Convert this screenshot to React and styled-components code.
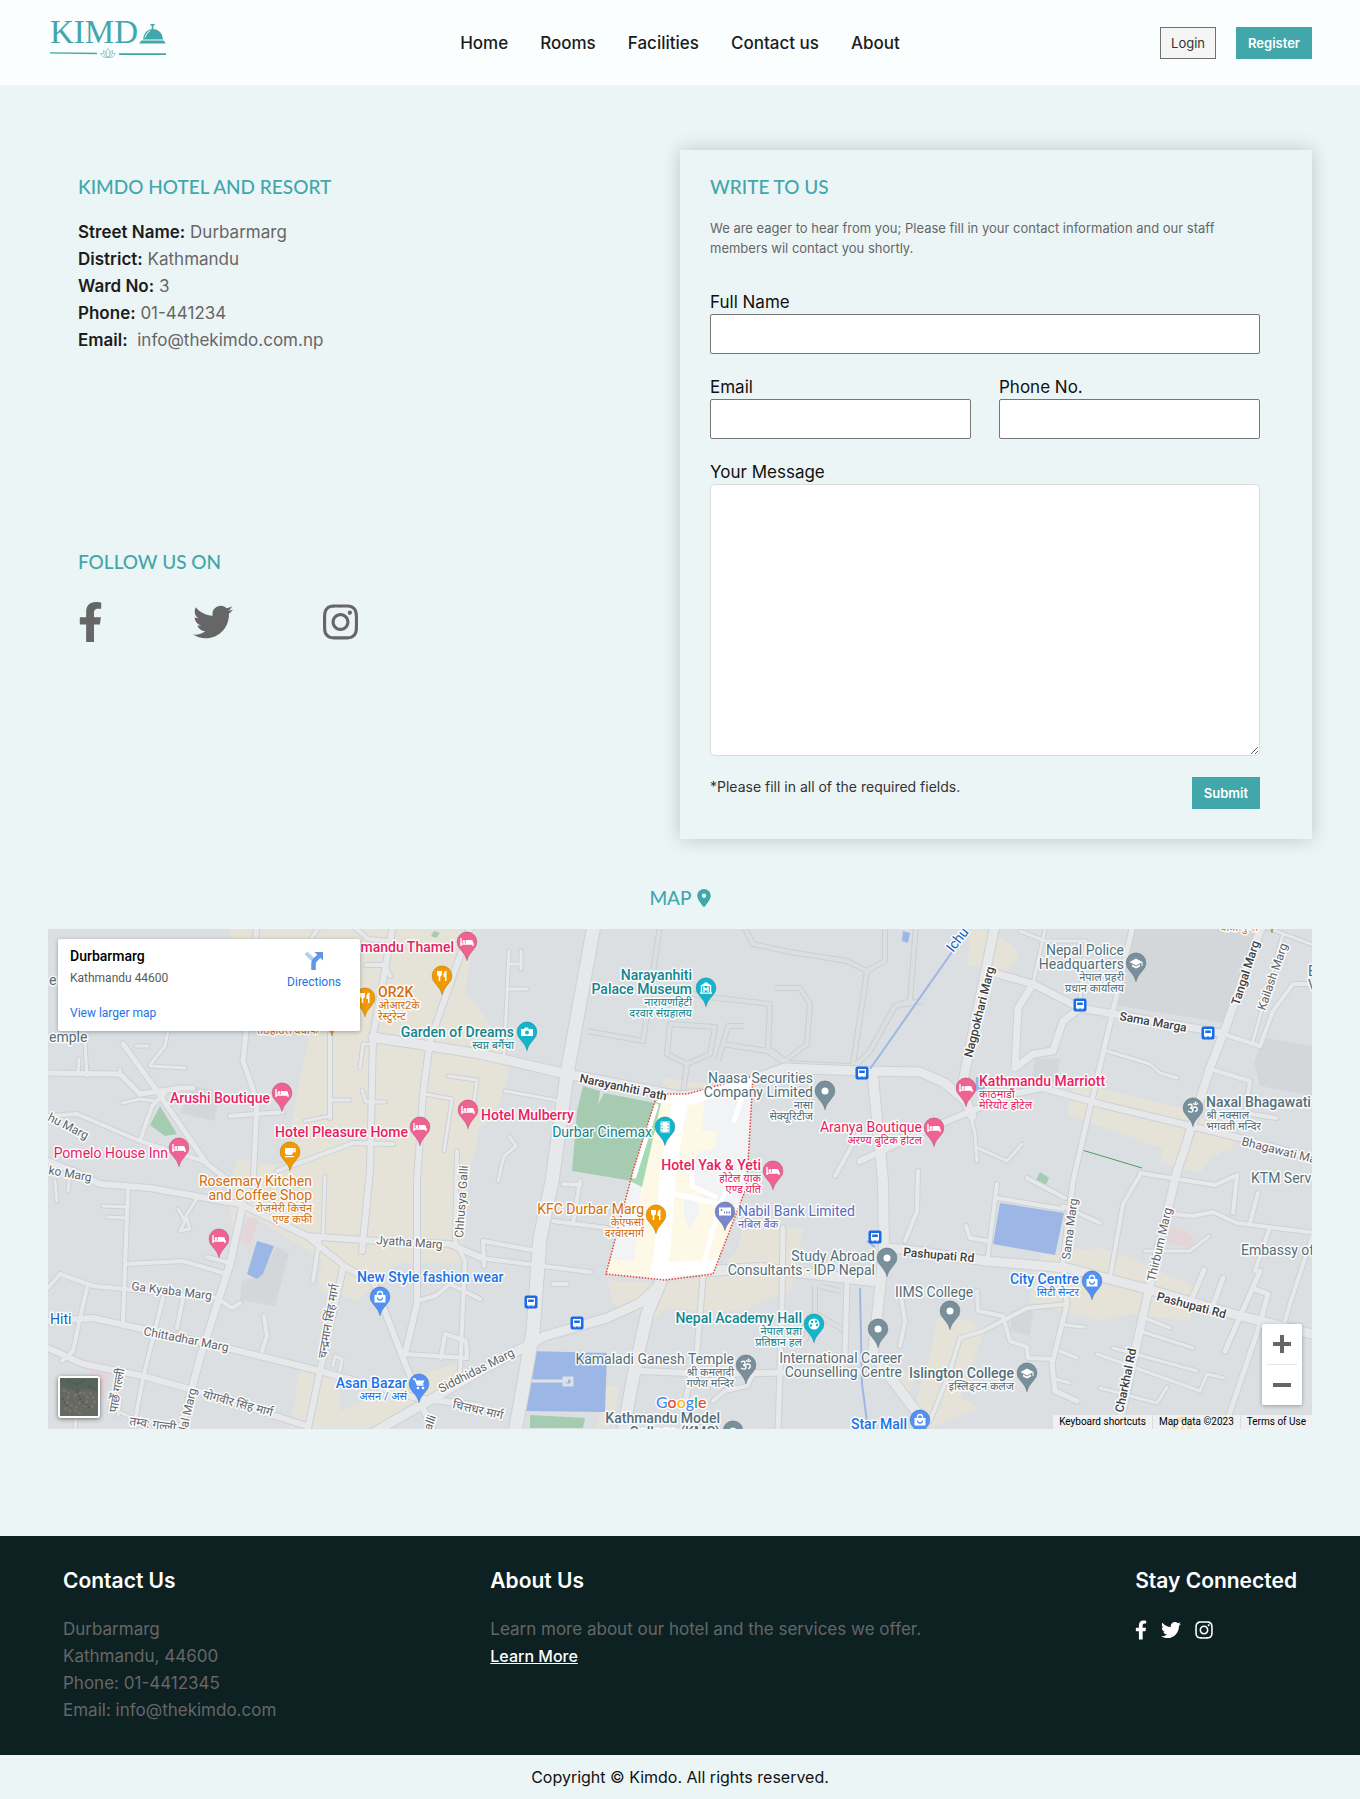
import React from "react";
import styled, { createGlobalStyle } from "styled-components";
import { FaFacebookF, FaTwitter, FaInstagram } from "react-icons/fa";
import { FaLocationDot } from "react-icons/fa6";

const GlobalStyle = createGlobalStyle`
  *, *::before, *::after { box-sizing: border-box; }
  body {
    margin: 0;
    background: #ecf5f6;
    color: #111;
    font-family: Inter, "Noto Sans", sans-serif;
    font-size: 16px;
    line-height: 24px;
  }
  h1, h2, p, ul, address { margin: 0; padding: 0; font-style: normal; }
  ul { list-style: none; }
  button, input, textarea { font: inherit; }
`;

/* ---------- header ---------- */

const Header = styled.header`
  display: grid;
  grid-template-columns: 1fr auto 1fr;
  align-items: center;
  padding: 15px 48px;
  min-height: 85px;
  background: #fafeff;
`;

const LogoLink = styled.a`
  justify-self: start;
  display: block;
  height: 55px;
`;

const NavList = styled.ul`
  display: flex;
  gap: 32px;
`;

const NavLink = styled.a`
  color: #1c1c1c;
  font-size: 17px;
  font-weight: 500;
  text-decoration: none;
`;

const Actions = styled.div`
  justify-self: end;
  display: flex;
  gap: 20px;
`;

const Button = styled.button`
  height: 32px;
  padding: 0 ${(p) => (p.$outlined ? 10 : 12)}px;
  font-size: 13px;
  line-height: 20px;
  border-radius: 0;
  cursor: pointer;
  border: ${(p) => (p.$outlined ? "1px solid #6f6f6f" : "0")};
  background: ${(p) => (p.$outlined ? "#f5f5f5" : "#42a7aa")};
  color: ${(p) => (p.$outlined ? "#333" : "#fff")};
  font-weight: ${(p) => (p.$outlined ? 400 : 600)};
`;

/* ---------- contact ---------- */

const Main = styled.main`
  padding: 65px 48px 107px;
`;

const Columns = styled.div`
  display: grid;
  grid-template-columns: 1fr 1fr;
`;

const Info = styled.section`
  display: flex;
  flex-direction: column;
  gap: 195px;
  padding: 24px 30px;
`;

const Heading = styled.h2`
  color: #42a7aa;
  font-family: Lato, sans-serif;
  font-size: 19px;
  line-height: 26px;
  font-weight: 500;
`;

const Address = styled.address`
  padding-top: 19px;
  color: #666;
  line-height: 27px;
  font-size: 17px;
`;

const Term = styled.strong`
  color: #1c1c1c;
  font-weight: 600;
`;

const Social = styled.ul`
  display: flex;
  gap: ${(p) => p.$gap}px;
  padding-top: ${(p) => p.$top}px;
  a { display: block; color: ${(p) => p.$color}; }
  svg { display: block; height: ${(p) => p.$size}px; }
`;

const Card = styled.section`
  padding: 24px 52px 30px 30px;
  background: #ecf5f6;
  box-shadow: 0 0 18px rgba(0, 0, 0, 0.2);
`;

const Intro = styled.p`
  padding: 18px 0 32px;
  font-size: 13px;
  line-height: 20px;
  color: #666;
`;

const Form = styled.form`
  display: grid;
  grid-template-columns: 1fr 1fr;
  column-gap: 28px;
  row-gap: 21px;
`;

const Field = styled.div`
  display: flex;
  flex-direction: column;
  grid-column: ${(p) => (p.$wide ? "1 / -1" : "auto")};
  font-size: 17px;
`;

const Input = styled.input`
  width: 100%;
  height: 40px;
  padding: 0 8px;
  border: 1px solid #767676;
  border-radius: 2px;
  background: #fff;
`;

const TextArea = styled.textarea`
  display: block;
  width: 100%;
  height: 272px;
  padding: 8px;
  border: 1px solid #dcdcdc;
  border-radius: 5px;
  background: #fff;
  resize: both;
`;

const FormFoot = styled.div`
  grid-column: 1 / -1;
  display: flex;
  justify-content: space-between;
  align-items: flex-start;
`;

const Note = styled.p`
  font-size: 14px;
  line-height: 20px;
  color: #333;
`;

/* ---------- map ---------- */

const MapHeading = styled(Heading)`
  display: flex;
  justify-content: center;
  align-items: center;
  gap: 5px;
  padding: 46px 0 18px;
  svg { width: 14px; height: 18px; }
`;

const MapFrame = styled.section`
  position: relative;
  height: 500px;
  overflow: hidden;
  font-family: Roboto, "Noto Sans", sans-serif;
  background: #dbdfe2;
`;

const MapDrawing = styled.svg`
  display: block;
  width: 100%;
  height: 100%;
`;

const PlaceCard = styled.div`
  position: absolute;
  top: 10px;
  left: 10px;
  width: 302px;
  height: 92px;
  padding: 8px 19px 9px 12px;
  display: flex;
  justify-content: space-between;
  background: #fff;
  border-radius: 2px;
  box-shadow: 0 1px 4px rgba(0, 0, 0, 0.3);
  font-size: 12px;
  line-height: 16px;
  a { color: #1a73e8; text-decoration: none; }
`;

const PlaceText = styled.div`
  display: flex;
  flex-direction: column;
  color: #5b5b5b;
  h2 { font-size: 14px; line-height: 18px; font-weight: 500; color: #000; }
  p { padding: 5px 0 19px; }
`;

const Directions = styled.a`
  display: flex;
  flex-direction: column;
  align-items: center;
  align-self: flex-start;
  gap: 3px;
  padding-top: 4px;
`;

const ZoomBox = styled.div`
  position: absolute;
  right: 10px;
  bottom: 24px;
  width: 40px;
  background: #fff;
  border-radius: 2px;
  box-shadow: 0 1px 4px rgba(0, 0, 0, 0.3);
  hr { margin: 0 5px; border: 0; border-top: 1px solid #e6e6e6; }
`;

const ZoomButton = styled.button`
  display: flex;
  align-items: center;
  justify-content: center;
  width: 40px;
  height: 40px;
  padding: 0;
  border: 0;
  background: none;
`;

const Satellite = styled.button`
  position: absolute;
  left: 10px;
  bottom: 11px;
  width: 42px;
  height: 42px;
  padding: 0;
  border: 2px solid #fff;
  border-radius: 3px;
  box-shadow: 0 1px 4px rgba(0, 0, 0, 0.5);
  overflow: hidden;
  background: #62685f;
  svg { display: block; }
`;

const Attribution = styled.div`
  position: absolute;
  right: 0;
  bottom: 0;
  display: flex;
  height: 14px;
  background: rgba(245, 245, 245, 0.75);
  font-size: 10px;
  line-height: 14px;
  > * { padding: 0 6px; color: #000; text-decoration: none; border: 0; background: none; line-height: 14px; }
  > * + * { border-left: 1px solid #dcdcdc; }
`;

/* ---------- footer ---------- */

const Footer = styled.footer`
  display: flex;
  justify-content: space-between;
  padding: 30px 63px 31px;
  background: #0d2123;
  color: #666;
  font-size: 17px;
  line-height: 27px;
`;

const FooterTitle = styled.h2`
  padding-bottom: 20px;
  color: #fff;
  font-size: 21px;
  line-height: 30px;
  font-weight: 600;
`;

const FooterLink = styled.a`
  color: #fff;
  font-size: 16px;
  font-weight: 500;
`;

const Copyright = styled.p`
  padding: 10px 0 11px;
  text-align: center;
  color: #111;
`;

/* ---------- map data ---------- */

const COMMERCIAL = [
  "230,928 475,928 465,990 482,1010 510,1062 505,1085 492,1120 480,1125 468,1180 462,1262 400,1262 385,1270 358,1300 318,1288 322,1258 252,1215 232,1228 230,1200 236,1158 285,1165 292,1120 300,1075 308,1045 308,1000 232,985",
  "970,928 982,928 1010,942 1020,955 1007,970 968,965",
  "1073,1087 1088,1085 1183,1107 1233,1133 1233,1147 1210,1157 1200,1172 1177,1167 1160,1160 1163,1147 1150,1143 1067,1113",
  "1043,1253 1100,1247 1130,1257 1197,1287 1190,1320 1130,1313 1100,1320 1073,1313 1030,1300 1033,1270",
  "937,1317 973,1320 982,1337 960,1397 980,1407 930,1427 910,1417 930,1357",
  "737,1250 745,1220 803,1228 795,1275 790,1290 740,1310 665,1308 655,1318 613,1303 608,1280 661,1282 715,1275",
  "663,1077 710,1083 700,1092 663,1090",
  "300,1367 340,1373 340,1410 430,1370 460,1362 470,1375 380,1427 290,1427",
  "604,1385 620,1385 610,1427 596,1427 600,1410",
  "903,1370 915,1378 910,1390 898,1388",
];

const DARK = [
  "1130,928 1258,928 1226,1022 1114,1004",
  "1265,1037 1312,1045 1312,1095 1260,1085 1254,1060",
  "276,1245 289,1253 275,1305 240,1299 242,1280 262,1275",
  "1035,1057 1060,1058 1055,1082 1032,1078",
  "193,1085 220,1090 214,1120 180,1112",
  "1012,1310 1033,1310 1030,1335 1010,1330",
];

const WATER = [
  "257,1240 274,1245 263,1273 257,1278 247,1273",
  "1000,1202 1064,1212 1055,1254 993,1243",
  "529,1350 607,1352 605,1411 526,1410",
  "903,930 910,932 908,942 902,940",
  "976,1076 986,1078 984,1092 975,1090",
];

const PINK_AREAS = [
  "247,1216 258,1218 250,1245 240,1240",
  "1170,1225 1187,1230 1195,1240 1190,1248 1167,1241",
  "90,1369 110,1373 104,1398 92,1390",
];

const GREEN = [
  "583,1085 600,1090 598,1104 604,1092 655,1102 633,1180 572,1170 577,1110",
  "1040,1171 1049,1177 1046,1184 1036,1179",
  "434,930 440,932 436,937 431,935",
  "160,1105 177,1133 165,1135 150,1124",
  "530,1414 585,1417 583,1427 530,1427",
];

const ROADS = [
  [14, "M594 924L568 1067L552 1180L540 1237L533 1330L515 1432"],
  [10, "M373 1036L480 1053L562 1072L680 1095L720 1090L753 1078L785 1067L860 1070L920 1071L945 1082L966 1100L972 1115"],
  [13, "M682 1100L668 1170L662 1253L661 1280L647 1313L633 1377L623 1432"],
  [10, "M655 1288L640 1302L607 1317L545 1335L480 1370L373 1432"],
  [11, "M662 1270L710 1270L760 1267L873 1280"],
  [11, "M873 1077L883 1180L884 1250L873 1353L925 1422"],
  [10, "M884 1247L900 1248L987 1260L1067 1267L1147 1288L1233 1313L1312 1333"],
  [10, "M995 924L963 1080"],
  [8, "M987 970L1033 983L1080 1007L1200 1028L1220 1032"],
  [9, "M1262 924L1227 1023L1210 1067L1183 1153L1177 1170L1147 1297L1117 1432"],
  [6, "M1133 924L1113 1010L1090 1107L1073 1180L1063 1260L1067 1303L1052 1363L1055 1390L1077 1400"],
  [8, "M1033 983L1018 1007L1015 1067L1033 1053L1053 1050L1063 1020L1080 1007"],
  [7, "M860 1160L940 1123L1013 1093L1043 1087L1100 1103L1240 1137L1316 1158"],
  [4, "M970 1112L975 1133L977 1160M978 1147L1007 1160L1022 1143"],
  [5, "M1207 1067L1250 1080L1245 1112L1276 1117M1220 1032L1260 1045L1273 1010L1293 983L1316 983"],
  [4, "M1107 1050L1150 1063L1160 1072L1177 1077M1283 933L1253 1040M1260 924L1316 945"],
  [4, "M1020 930L1045 940L1086 940L1080 1000M1045 928L1033 983"],
  [5, "M997 1183L988 1255M997 1197L1063 1208M1027 1177L1065 1197M1063 1205L1100 1222M966 1225L970 1237L988 1240"],
  [5, "M1140 1174L1123 1203L1110 1277M1140 1172L1215 1184L1237 1174L1233 1212"],
  [5, "M1173 1213L1193 1215L1213 1211L1237 1222L1316 1232M1258 1192L1250 1222M1270 1226L1255 1270M1312 1236L1290 1303L1283 1327"],
  [5, "M1067 1303L1027 1307L983 1330L960 1337L950 1370L930 1420M977 1290L978 1310L1003 1315L1010 1340L1027 1346L1028 1357L1052 1358"],
  [4, "M1145 1317L1170 1327M1140 1330L1193 1347M1113 1347L1197 1370M1097 1353L1200 1390L1207 1373L1224 1377M1100 1387L1157 1402L1167 1386"],
  [6, "M1260 1323L1223 1432M1260 1270L1225 1350M1223 1277L1212 1307M1204 1269L1190 1302M1252 1287L1268 1293L1260 1322"],
  [4, "M1065 1324L1084 1326M1060 1350L1077 1357M1055 1378L1070 1382M1145 1250L1190 1250L1209 1235"],
  [6, "M703 1277L697 1350L685 1400M783 1227L782 1303L778 1432M847 1280L845 1355"],
  [7, "M640 1370L713 1373L863 1370"],
  [5, "M483 1240L537 1250M480 1257L590 1271M553 1220L607 1227M580 1180L573 1223M483 1240L484 1265M580 1184L563 1183M553 1283L567 1283"],
  [4, "M509 950L504 1060M509 963L521 963M521 950L521 968M509 988L527 988M505 1090L560 1100M509 1135L516 1145L504 1155L498 1180"],
  [5, "M713 1400L725 1390L747 1385L755 1370M900 1345L905 1320L900 1290M835 1175L860 1130M918 1170L917 1210L905 1240"],
  [6, "M123 1043L157 1090L207 1163L232 1182M48 1072L120 1073L140 1093L180 1087L193 1087M257 924L243 1060L257 1100L253 1185"],
  [7, "M393 924L373 1035L370 1170L362 1250M471 924L430 1040L423 1093L417 1180L417 1303L405 1353"],
  [5, "M330 1033L330 1117M277 1170L353 1142L393 1143M48 1115L77 1113L140 1140L203 1160M140 1140L152 1105L165 1092M230 1115L283 1111"],
  [4, "M136 1045L148 1045M150 1065L185 1067M150 1064L165 1045L168 1030M85 1040L87 1075M79 1058L78 1074M120 1068L120 1075M122 1102L140 1098L155 1100"],
  [4, "M305 1120L330 1115M330 1099L350 1099M360 1067L363 1043L375 1043M362 1089L366 1101L385 1101M448 1075L477 1079L472 1115M425 1093L452 1098L444 1150"],
  [5, "M373 1039L430 1047M366 964L385 964L390 975M320 924L310 940M352 924L368 938L390 940"],
  [7, "M48 1160L73 1170L100 1183L150 1187L240 1203L307 1235L347 1267L373 1280L403 1357L420 1400L434 1432"],
  [8, "M243 1203L230 1263L200 1357L180 1432"],
  [5, "M128 1187L123 1320M128 1263L183 1260L227 1273M48 1287L60 1273L93 1285L217 1297L232 1307L240 1302M207 1256L230 1262"],
  [7, "M48 1320L93 1317L227 1347L320 1370L417 1397L480 1405M48 1347L83 1363L143 1375L207 1393L307 1425"],
  [7, "M343 1267L320 1370L307 1432M307 1235L377 1240L450 1243L484 1258"],
  [5, "M457 1150L455 1240L465 1260L460 1370M417 1300L435 1295L450 1283L480 1298M405 1353L467 1357L466 1340L445 1333L441 1357"],
  [5, "M87 1287L80 1317L73 1350L62 1360M163 1297L143 1377L135 1420M183 1297L177 1327M264 1315L267 1335L262 1350M320 1235L313 1280"],
  [4, "M178 1208L185 1220L180 1230L190 1228L186 1215L197 1197M325 1175L323 1232M103 1205L128 1206M108 1216L128 1217M55 1180L57 1200M70 1172L68 1190"],
  [4, "M333 1365L335 1355L342 1358L340 1370M75 1430L78 1395M110 1407L135 1418M118 1415L120 1400"],
];

const PALACE = [
  "M743 924L753 943L790 951L847 960L867 970L853 1063",
  "M660 924L643 1040L587 1030",
  "M670 1023L667 1053L687 1063L710 1053L715 1026Z",
  "M775 987L800 987L810 1003L807 1043L785 1060L768 1047L770 1003L700 995L670 985",
  "M687 1063L683 1092M743 1025L728 1025L718 1060M722 1043L768 1050L785 1062L850 1065",
  "M922 1000L895 1005L870 1050L855 1065M916 924L910 1000L895 1005",
  "M867 970L885 960L885 928",
  "M815 1285L815 1310L805 1340M820 1285L840 1290M815 1312L845 1330",
];

const BOUNDARY =
  "M667 1093L687 1093L753 1075L747 1180L745 1190L713 1273L665 1279L606 1273L633 1170L655 1100Z";

const COLORS = {
  hotel: "#f06292",
  food: "#f29900",
  cup: "#f29900",
  camera: "#12b5cb",
  museum: "#12b5cb",
  film: "#12b5cb",
  art: "#12b5cb",
  dot: "#78909c",
  school: "#78909c",
  om: "#78909c",
  bank: "#7986cb",
  bag: "#5491f5",
  cart: "#5491f5",
};

const PINS = [
  ["hotel", 467, 941], ["hotel", 282, 1092], ["hotel", 420, 1126], ["hotel", 468, 1109],
  ["hotel", 179, 1147], ["hotel", 219, 1238], ["hotel", 773, 1170], ["hotel", 934, 1127],
  ["hotel", 966, 1087], ["food", 442, 975], ["food", 365, 997], ["food", 332, 1016],
  ["cup", 290, 1151], ["food", 656, 1214], ["camera", 527, 1031], ["museum", 706, 987],
  ["film", 665, 1126], ["art", 814, 1323], ["dot", 825, 1090], ["school", 1136, 962],
  ["om", 1193, 1107], ["dot", 887, 1257], ["dot", 878, 1328], ["dot", 950, 1310],
  ["om", 746, 1364], ["school", 1027, 1372], ["dot", 733, 1430], ["bank", 725, 1211],
  ["bag", 380, 1296], ["cart", 419, 1383], ["bag", 1092, 1280], ["bag", 920, 1419],
  ["food", 1272, 913], ["food", 1182, 1426],
];

const STOPS = [
  [862, 1072], [1080, 1004], [1208, 1032], [531, 1301], [577, 1322], [875, 1236],
];

const PINK = "#e91e63";
const ORANGE = "#d56e0c";
const TEAL = "#12858e";
const SLATE = "#546e7a";
const INDIGO = "#5c6bc0";
const BLUE = "#1a73e8";

/* x, first baseline, anchor, colour, weight, Latin lines, Devanagari lines */
const PLACES = [
  [454, 951, "end", PINK, 500, ["mandu Thamel"], []],
  [378, 996, "start", ORANGE, 500, ["OR2K"], ["ओआर2के", "रेस्टुरेन्ट"]],
  [514, 1036, "end", TEAL, 500, ["Garden of Dreams"], ["स्वप्न बगैंचा"]],
  [270, 1102, "end", PINK, 500, ["Arushi Boutique"], []],
  [408, 1136, "end", PINK, 500, ["Hotel Pleasure Home"], []],
  [481, 1119, "start", PINK, 500, ["Hotel Mulberry"], []],
  [168, 1157, "end", PINK, 400, ["Pomelo House Inn"], []],
  [312, 1185, "end", ORANGE, 400, ["Rosemary Kitchen", "and Coffee Shop"], ["रोजमेरी किचेन", "एण्ड कफी"]],
  [692, 979, "end", TEAL, 500, ["Narayanhiti", "Palace Museum"], ["नारायणहिटी", "दरवार संग्रहालय"]],
  [813, 1082, "end", SLATE, 400, ["Naasa Securities", "Company Limited"], ["नासा", "सेक्यूरिटीज"]],
  [652, 1136, "end", TEAL, 400, ["Durbar Cinemax"], []],
  [761, 1169, "end", PINK, 500, ["Hotel Yak & Yeti"], ["होटेल याक", "एण्ड यति"]],
  [644, 1213, "end", ORANGE, 400, ["KFC Durbar Marg"], ["केएफसी", "दरवारमार्ग"]],
  [738, 1215, "start", INDIGO, 400, ["Nabil Bank Limited"], ["नबिल बैंक"]],
  [922, 1131, "end", PINK, 400, ["Aranya Boutique"], ["अरण्य बुटिक होटल"]],
  [979, 1085, "start", PINK, 500, ["Kathmandu Marriott"], ["काठमाडौं", "मेरियोट होटेल"]],
  [1124, 954, "end", SLATE, 400, ["Nepal Police", "Headquarters"], ["नेपाल प्रहरी", "प्रधान कार्यालय"]],
  [1206, 1106, "start", SLATE, 500, ["Naxal Bhagawati"], ["श्री नक्साल", "भगवती मन्दिर"]],
  [1251, 1182, "start", SLATE, 400, ["KTM Serv"], []],
  [1241, 1254, "start", SLATE, 400, ["Embassy of"], []],
  [875, 1260, "end", SLATE, 400, ["Study Abroad", "Consultants - IDP Nepal"], []],
  [895, 1296, "start", SLATE, 400, ["IIMS College"], []],
  [1079, 1283, "end", BLUE, 500, ["City Centre"], ["सिटी सेन्टर"]],
  [1014, 1377, "end", SLATE, 500, ["Islington College"], ["इस्लिङ्टन कलेज"]],
  [902, 1362, "end", SLATE, 400, ["International Career", "Counselling Centre"], []],
  [802, 1322, "end", TEAL, 500, ["Nepal Academy Hall"], ["नेपाल प्रज्ञा", "प्रतिष्ठान हल"]],
  [734, 1363, "end", SLATE, 400, ["Kamaladi Ganesh Temple"], ["श्री कमलादी", "गणेश मन्दिर"]],
  [720, 1422, "end", SLATE, 500, ["Kathmandu Model", "College (KMC)"], []],
  [907, 1428, "end", BLUE, 500, ["Star Mall"], []],
  [357, 1281, "start", BLUE, 500, ["New Style fashion wear"], []],
  [407, 1387, "end", BLUE, 500, ["Asan Bazar"], ["असन / असं"]],
  [49, 1041, "start", SLATE, 400, ["emple"], []],
  [49, 984, "start", SLATE, 400, ["e"], []],
  [1308, 975, "start", SLATE, 400, ["E", "V"], []],
  [50, 1323, "start", "#1a5fc4", 400, ["Hiti"], []],
  [257, 1035, "start", ORANGE, 400, [], ["तठहाउस क्याफे"]],
  [1220, 932, "start", ORANGE, 400, [], ["यात्रा गुम्स"]],
];

/* x, y, angle, text, dark */
const STREETS = [
  [579, 1081, 12, "Narayanhiti Path", true],
  [972, 1057, -76, "Nagpokhari Marg", true],
  [1119, 1019, 10, "Sama Marga", true],
  [1239, 1005, -72, "Tangal Marg", true],
  [1265, 1010, -71, "Kailash Marg", false],
  [1241, 1144, 14, "Bhagawati Marg", false],
  [903, 1255, 5, "Pashupati Rd", true],
  [1156, 1299, 15, "Pashupati Rd", true],
  [1070, 1259, -83, "Sama Marg", false],
  [1155, 1281, -77, "Thirbum Marg", false],
  [1123, 1412, -78, "Charkhal Rd", true],
  [376, 1243, 4, "Jyatha Marg", false],
  [463, 1237, -86, "Chhusya Galli", false],
  [131, 1289, 7, "Ga Kyaba Marg", false],
  [143, 1334, 11, "Chittadhar Marg", false],
  [326, 1358, -80, "चन्द्रमान सिंह मार्ग", false],
  [441, 1392, -27, "Siddhidas Marg", false],
  [452, 1407, 13, "चित्तधर मार्ग", false],
  [202, 1397, 15, "योगवीर सिंह मार्ग", false],
  [117, 1412, -80, "पाछेँ गल्ली", false],
  [187, 1430, -77, "lal Marg", false],
  [129, 1424, 8, "तम्व: गल्ली", false],
  [431, 1430, -70, "alli", false],
  [47, 1119, 27, "hu Marg", false],
  [48, 1173, 10, "ko Marg", false],
];

const Halo = styled.text`
  paint-order: stroke;
  stroke: rgba(255, 255, 255, 0.9);
  stroke-width: 3px;
  stroke-linejoin: round;
`;

function Glyph({ kind }) {
  const white = { fill: "#fff" };
  const line = { fill: "none", stroke: "#fff", strokeWidth: 1.4 };
  switch (kind) {
    case "hotel":
      return (
        <g>
          <path d="M-6 -4v8M6 4v-3M-6 2H6" {...line} />
          <path d="M-1 -2h5a2 2 0 0 1 2 2v2h-7z" {...white} />
          <circle cx="-3" cy="-0.5" r="1.5" {...white} />
        </g>
      );
    case "food":
      return (
        <g>
          <path d="M-5 -5h5v3a2.5 2.5 0 0 1 -1.700 2.400V5h-1.600V0.400A2.500 2.500 0 0 1 -5 -2z" {...white} />
          <path d="M4.500 -5.500V5H3V1H1.500V-2.500Q2 -5 4.500 -5.500z" {...white} />
        </g>
      );
    case "cup":
      return (
        <g>
          <path d="M-5 -4h8v4a3 3 0 0 1 -3 3h-2a3 3 0 0 1 -3 -3z M-5 4h9v1.300h-9z" {...white} />
          <path d="M3 -3h2v2.500H3" {...line} />
        </g>
      );
    case "camera":
      return (
        <g>
          <path d="M-6 -3h3l1 -1.500h3L2 -3h4v7h-12z" {...white} />
          <circle cx="0" cy="0.500" r="2" fill="#12b5cb" />
        </g>
      );
    case "museum":
      return (
        <g>
          <path d="M-6 -2L0 -6L6 -2zM-6 4.500H6V5.800H-6z" {...white} />
          <path d="M-4.500 -2V5M4.500 -2V5M-2 4V-0.500L0 2L2 -0.500V4" {...line} />
        </g>
      );
    case "film":
      return (
        <g>
          <path d="M-4.500 -5.500h9v11h-9z" {...white} />
          <path d="M-3 -5v10M3 -5v10" stroke="#12b5cb" strokeDasharray="1.500 1.500" />
        </g>
      );
    case "art":
      return (
        <g>
          <circle r="5.500" {...white} />
          {[[-2, -2], [2, -2.500], [3, 1], [-3, 1.500]].map(([x, y]) => (
            <circle key={`${x}${y}`} cx={x} cy={y} r="1.200" fill="#12b5cb" />
          ))}
        </g>
      );
    case "dot":
      return <circle r="3.500" {...white} />;
    case "school":
      return <path d="M-6.500 -1L0 -4.500L6.500 -1L0 2.500zM-4 1.500L0 3.500L4 1.500V3.500L0 5.500L-4 3.500zM5.500 -1h1v4h-1z" {...white} />;
    case "om":
      return (
        <g>
          <path d="M-5 -3Q-1 -5 -1 -2Q-1 0 -3 0Q0 0 0 2.500Q-1 5.500 -5 3M0 0Q2 -2 4 0Q5 3 2 3.500M0 -4.500Q2.500 -3 5 -4.500" {...line} />
          <circle cx="2.500" cy="-5.500" r="0.900" {...white} />
        </g>
      );
    case "bank":
      return (
        <g>
          <path d="M-6 -4.500h12v8h-12z" {...white} />
          <circle cx="-3.500" cy="-2" r="1" fill="#7986cb" />
          <path d="M-1 0.500h1M1 0.500h1.500M3.500 0.500h1.500" stroke="#7986cb" strokeWidth="2" />
        </g>
      );
    case "bag":
      return (
        <g>
          <path d="M-5.500 -2h11v7.500h-11z" {...white} />
          <path d="M-2.500 -2v-1a2.500 2.500 0 0 1 5 0v1" {...line} />
          <path d="M-2.500 0.500a2.500 2.500 0 0 0 5 0" fill="none" stroke="#5491f5" strokeWidth="1.300" />
        </g>
      );
    default:
      return (
        <g>
          <path d="M-6 -5h2l2.500 6h6" {...line} />
          <path d="M-3.500 -3.500h9l-2 4h-5.500z" {...white} />
          <circle cx="-1" cy="4" r="1.300" {...white} />
          <circle cx="4" cy="4" r="1.300" {...white} />
        </g>
      );
  }
}

function Pin({ kind, x, y }) {
  return (
    <g transform={`translate(${x} ${y})`}>
      <path
        d="M0 19C-1.500 13 -4 11 -7 7A10 10 0 1 1 7 7C4 11 1.500 13 0 19z"
        fill={COLORS[kind]}
        stroke="rgba(0,0,0,.25)"
        strokeWidth=".6"
      />
      <Glyph kind={kind} />
    </g>
  );
}

function CityMap() {
  return (
    <MapDrawing viewBox="48 928 1264 500" preserveAspectRatio="xMidYMid slice" role="img" aria-label="Map of Durbarmarg, Kathmandu">
      <defs>
        <clipPath id="district">
          <path d={BOUNDARY} />
        </clipPath>
      </defs>
      {DARK.map((p) => <polygon key={p} points={p} fill="#d3d7da" />)}
      {COMMERCIAL.map((p) => <polygon key={p} points={p} fill="#e5e3d8" />)}
      {PINK_AREAS.map((p) => <polygon key={p} points={p} fill="#e4d5d8" />)}
      {GREEN.map((p) => <polygon key={p} points={p} fill="#a5ccb1" />)}
      {WATER.map((p) => <polygon key={p} points={p} fill="#9cb7e5" />)}
      <path d="M526 1380H568M564 1377h8v7h-8z" stroke="#dfe2e5" strokeWidth="3" fill="none" />
      <path d="M1082 1149L1142 1167" stroke="#4c9c63" strokeWidth="1" />

      <g fill="none" strokeLinejoin="round">
        {PALACE.map((d) => <path key={d} d={d} stroke="#cbcfd2" strokeWidth="6" />)}
        {PALACE.map((d) => <path key={d} d={d} stroke="#dcdfe2" strokeWidth="4" />)}
      </g>
      <g fill="none" strokeLinejoin="round" strokeLinecap="round">
        {ROADS.map(([w, d]) => <path key={d} d={d} stroke="#cdd1d5" strokeWidth={w + 1} />)}
        {ROADS.map(([w, d]) => <path key={d} d={d} stroke="#e7e8ea" strokeWidth={w - 1} />)}
      </g>
      <path d="M966 931L870 1068M860 1287L862 1383L868 1428M867 1240L875 1246" stroke="#9cb7e5" strokeWidth="2" fill="none" />

      <g clipPath="url(#district)">
        <path d={BOUNDARY} fill="#f1f3f4" />
        <polygon
          points="660,1098 705,1098 702,1130 717,1130 715,1148 700,1150 690,1175 705,1200 744,1205 713,1266 663,1275 604,1275 612,1258 634,1260 642,1180"
          fill="#fef8e6"
        />
        <polygon points="662,1098 642,1186 630,1180 655,1098" fill="#a6dab5" />
        <polygon points="684,1195 695,1195 700,1210 690,1228 684,1215" fill="#f1f3f4" />
        <g fill="none" stroke="#fff" strokeLinejoin="round" strokeLinecap="round">
          <path d="M682 1090L668 1170L662 1253L656 1285" strokeWidth="16" />
          <path d="M655 1280L670 1268L713 1266L720 1262" strokeWidth="14" />
          <path d="M660 1096L690 1098L755 1078" strokeWidth="12" />
          <path d="M734 1120L748 1080M675 1193L720 1203L703 1265M692 1160L692 1185L715 1196M720 1203L730 1180L748 1195M656 1105L634 1175" strokeWidth="5" />
        </g>
      </g>
      <path d={BOUNDARY} fill="none" stroke="#ea4335" strokeWidth="1.500" strokeDasharray="1.500 1.500" />

      {STREETS.map(([x, y, angle, label, dark]) => (
        <Halo
          key={`${x}-${y}`}
          transform={`translate(${x} ${y}) rotate(${angle})`}
          fontSize="12"
          fontWeight={dark ? 500 : 400}
          fill={dark ? "#3c4043" : "#5f6368"}
        >
          {label}
        </Halo>
      ))}
      <Halo transform="translate(953 952) rotate(-52)" fontSize="14" fill="#1a5fc4">Ichu</Halo>

      {STOPS.map(([x, y]) => (
        <g key={`${x}-${y}`} transform={`translate(${x} ${y})`}>
          <rect x="-6.500" y="-6.500" width="13" height="13" rx="2" fill="#1a6be6" />
          <path d="M-4 -4h8v7.500h-1.500v1h-1v-1h-3v1h-1v-1h-1.500z" fill="#fff" />
          <path d="M-2.800 -2.500h5.600v2.500h-5.600z" fill="#1a6be6" />
        </g>
      ))}
      {PINS.map(([kind, x, y]) => <Pin key={`${x}-${y}`} kind={kind} x={x} y={y} />)}

      {PLACES.map(([x, y, anchor, color, weight, latin, local]) => (
        <g key={`${x}-${y}`} textAnchor={anchor} fill={color}>
          {local.map((t, i) => (
            <Halo key={t} x={x} y={y + latin.length * 14 - 2 + i * 11} fontSize="11">{t}</Halo>
          ))}
          {latin.map((t, i) => (
            <Halo key={t} x={x} y={y + i * 14} fontSize="14" fontWeight={weight}>{t}</Halo>
          ))}
        </g>
      ))}

      <Halo x="656" y="1407" fontSize="16" fontWeight="500" fontFamily="Lato">
        <tspan fill="#4285f4">G</tspan>
        <tspan fill="#ea4335">o</tspan>
        <tspan fill="#fbbc04">o</tspan>
        <tspan fill="#4285f4">g</tspan>
        <tspan fill="#34a853">l</tspan>
        <tspan fill="#ea4335">e</tspan>
      </Halo>
    </MapDrawing>
  );
}

function Logo() {
  return (
    <svg width="120" height="50" viewBox="48 15 120 50" role="img" aria-label="Kimdo">
      <g fill="#42a7aa">
        <text x="50" y="43" fontFamily="Liberation Serif, serif" fontSize="33">KIMD</text>
        <path d="M139 43.500L141.500 40.500H163.500L166 43.500z" />
        <path d="M143 39.500A10 10.500 0 0 1 163 39.500z" />
        <path d="M150.500 24h4v1.500h-1.200v4h-1.600v-4h-1.200z" />
        <path d="M50 52.200L97 52.800V54.200L50 53.600zM119 53.200H166V55H119z" />
      </g>
      <path d="M145 37.500A8.500 9 0 0 1 150 31" fill="none" stroke="#fafeff" strokeWidth="1" />
      <path
        d="M108 57.500Q103.500 53 108 48.500Q112.500 53 108 57.500M108 57.500Q103 56 103.500 50.500Q106 51.500 107 54M108 57.500Q113 56 112.500 50.500Q110 51.500 109 54M108 57.500Q102 58 100.800 53.500L103.500 53.500M108 57.500Q114 58 115.200 53.500L112.500 53.500"
        fill="none"
        stroke="#7cc3c5"
        strokeWidth=".8"
      />
    </svg>
  );
}

const SOCIAL = [
  ["Facebook", FaFacebookF],
  ["Twitter", FaTwitter],
  ["Instagram", FaInstagram],
];

const SocialIcon = styled.span`
  display: block;
  svg { width: ${(p) => p.$width}px; }
`;

function SocialLinks({ widths, ...rest }) {
  return (
    <Social {...rest}>
      {SOCIAL.map(([name, Icon], i) => (
        <li key={name}>
          <a href={`#${name.toLowerCase()}`} aria-label={name}>
            <SocialIcon $width={widths[i]}><Icon /></SocialIcon>
          </a>
        </li>
      ))}
    </Social>
  );
}

const NAV = ["Home", "Rooms", "Facilities", "Contact us", "About"];

const DETAILS = [
  ["Street Name:", "Durbarmarg"],
  ["District:", "Kathmandu"],
  ["Ward No:", "3"],
  ["Phone:", "01-441234"],
  ["Email:", "\u00a0info@thekimdo.com.np"],
];

export default function App() {
  return (
    <>
      <GlobalStyle />
      <Header>
        <LogoLink href="#home"><Logo /></LogoLink>
        <nav>
          <NavList>
            {NAV.map((item) => (
              <li key={item}><NavLink href="#nav">{item}</NavLink></li>
            ))}
          </NavList>
        </nav>
        <Actions>
          <Button type="button" $outlined>Login</Button>
          <Button type="button">Register</Button>
        </Actions>
      </Header>

      <Main>
        <Columns>
          <Info>
            <div>
              <Heading>KIMDO HOTEL AND RESORT</Heading>
              <Address>
                {DETAILS.map(([term, value]) => (
                  <div key={term}><Term>{term}</Term> {value}</div>
                ))}
              </Address>
            </div>
            <div>
              <Heading>FOLLOW US ON</Heading>
              <SocialLinks widths={[25, 40, 35]} $gap={90} $top={27} $size={40} $color="#666" />
            </div>
          </Info>

          <Card>
            <Heading>WRITE TO US</Heading>
            <Intro>
              We are eager to hear from you; Please fill in your contact information and our staff
              members wil contact you shortly.
            </Intro>
            <Form onSubmit={(e) => e.preventDefault()}>
              <Field $wide>
                <label htmlFor="name">Full Name</label>
                <Input id="name" type="text" />
              </Field>
              <Field>
                <label htmlFor="email">Email</label>
                <Input id="email" type="email" />
              </Field>
              <Field>
                <label htmlFor="phone">Phone No.</label>
                <Input id="phone" type="tel" />
              </Field>
              <Field $wide>
                <label htmlFor="message">Your Message</label>
                <TextArea id="message" />
              </Field>
              <FormFoot>
                <Note>*Please fill in all of the required fields.</Note>
                <Button type="submit">Submit</Button>
              </FormFoot>
            </Form>
          </Card>
        </Columns>

        <MapHeading>MAP <FaLocationDot /></MapHeading>
        <MapFrame>
          <CityMap />
          <PlaceCard>
            <PlaceText>
              <h2>Durbarmarg</h2>
              <p>Kathmandu 44600</p>
              <a href="#map">View larger map</a>
            </PlaceText>
            <Directions href="#directions">
              <svg width="20" height="20" viewBox="0 0 20 20" aria-hidden="true">
                <path d="M2 2L10 9.500V12" fill="none" stroke="#b3cff5" strokeWidth="4" />
                <path d="M9.500 19V13Q9.500 10 12 8L15 5" fill="none" stroke="#5e97e8" strokeWidth="4.500" />
                <path d="M10.500 1H19V9.500z" fill="#5e97e8" />
              </svg>
              Directions
            </Directions>
          </PlaceCard>
          <Satellite type="button" aria-label="Show satellite imagery">
            <svg width="38" height="38" viewBox="0 0 38 38">
              <path d="M0 0h38v38h-38z" fill="#666961" />
              <path d="M0 0h38v14l-12 -3l-10 2l-16 -6z" fill="#56645b" />
              <path d="M3 12l6 3l-2 9l6 4M14 18l9 -4l5 6l-3 9M20 24l-6 8l8 4M30 14l5 9l-4 8M4 30l8 4" stroke="#7c776f" fill="none" strokeWidth="2" strokeDasharray="3 2" />
              <path d="M8 3l8 3l9 -3M28 8l8 3M2 20l5 8M17 13l4 10l10 8" stroke="#4b544c" fill="none" strokeWidth="1.500" strokeDasharray="2 2" />
            </svg>
          </Satellite>
          <ZoomBox>
            <ZoomButton type="button" aria-label="Zoom in">
              <svg width="18" height="18"><path d="M0 9H18M9 0V18" stroke="#666" strokeWidth="4" /></svg>
            </ZoomButton>
            <hr />
            <ZoomButton type="button" aria-label="Zoom out">
              <svg width="18" height="18"><path d="M0 9H18" stroke="#666" strokeWidth="4" /></svg>
            </ZoomButton>
          </ZoomBox>
          <Attribution>
            <button type="button">Keyboard shortcuts</button>
            <span>Map data ©2023</span>
            <a href="#terms">Terms of Use</a>
          </Attribution>
        </MapFrame>
      </Main>

      <Footer>
        <div>
          <FooterTitle>Contact Us</FooterTitle>
          <p>Durbarmarg</p>
          <p>Kathmandu, 44600</p>
          <p>Phone: 01-4412345</p>
          <p>Email: info@thekimdo.com</p>
        </div>
        <div>
          <FooterTitle>About Us</FooterTitle>
          <p>Learn more about our hotel and the services we offer.</p>
          <FooterLink href="#about">Learn More</FooterLink>
        </div>
        <div>
          <FooterTitle>Stay Connected</FooterTitle>
          <SocialLinks widths={[12, 20, 18]} $gap={14} $top={4} $size={20} $color="#fff" />
        </div>
      </Footer>
      <Copyright>Copyright © Kimdo. All rights reserved.</Copyright>
    </>
  );
}
